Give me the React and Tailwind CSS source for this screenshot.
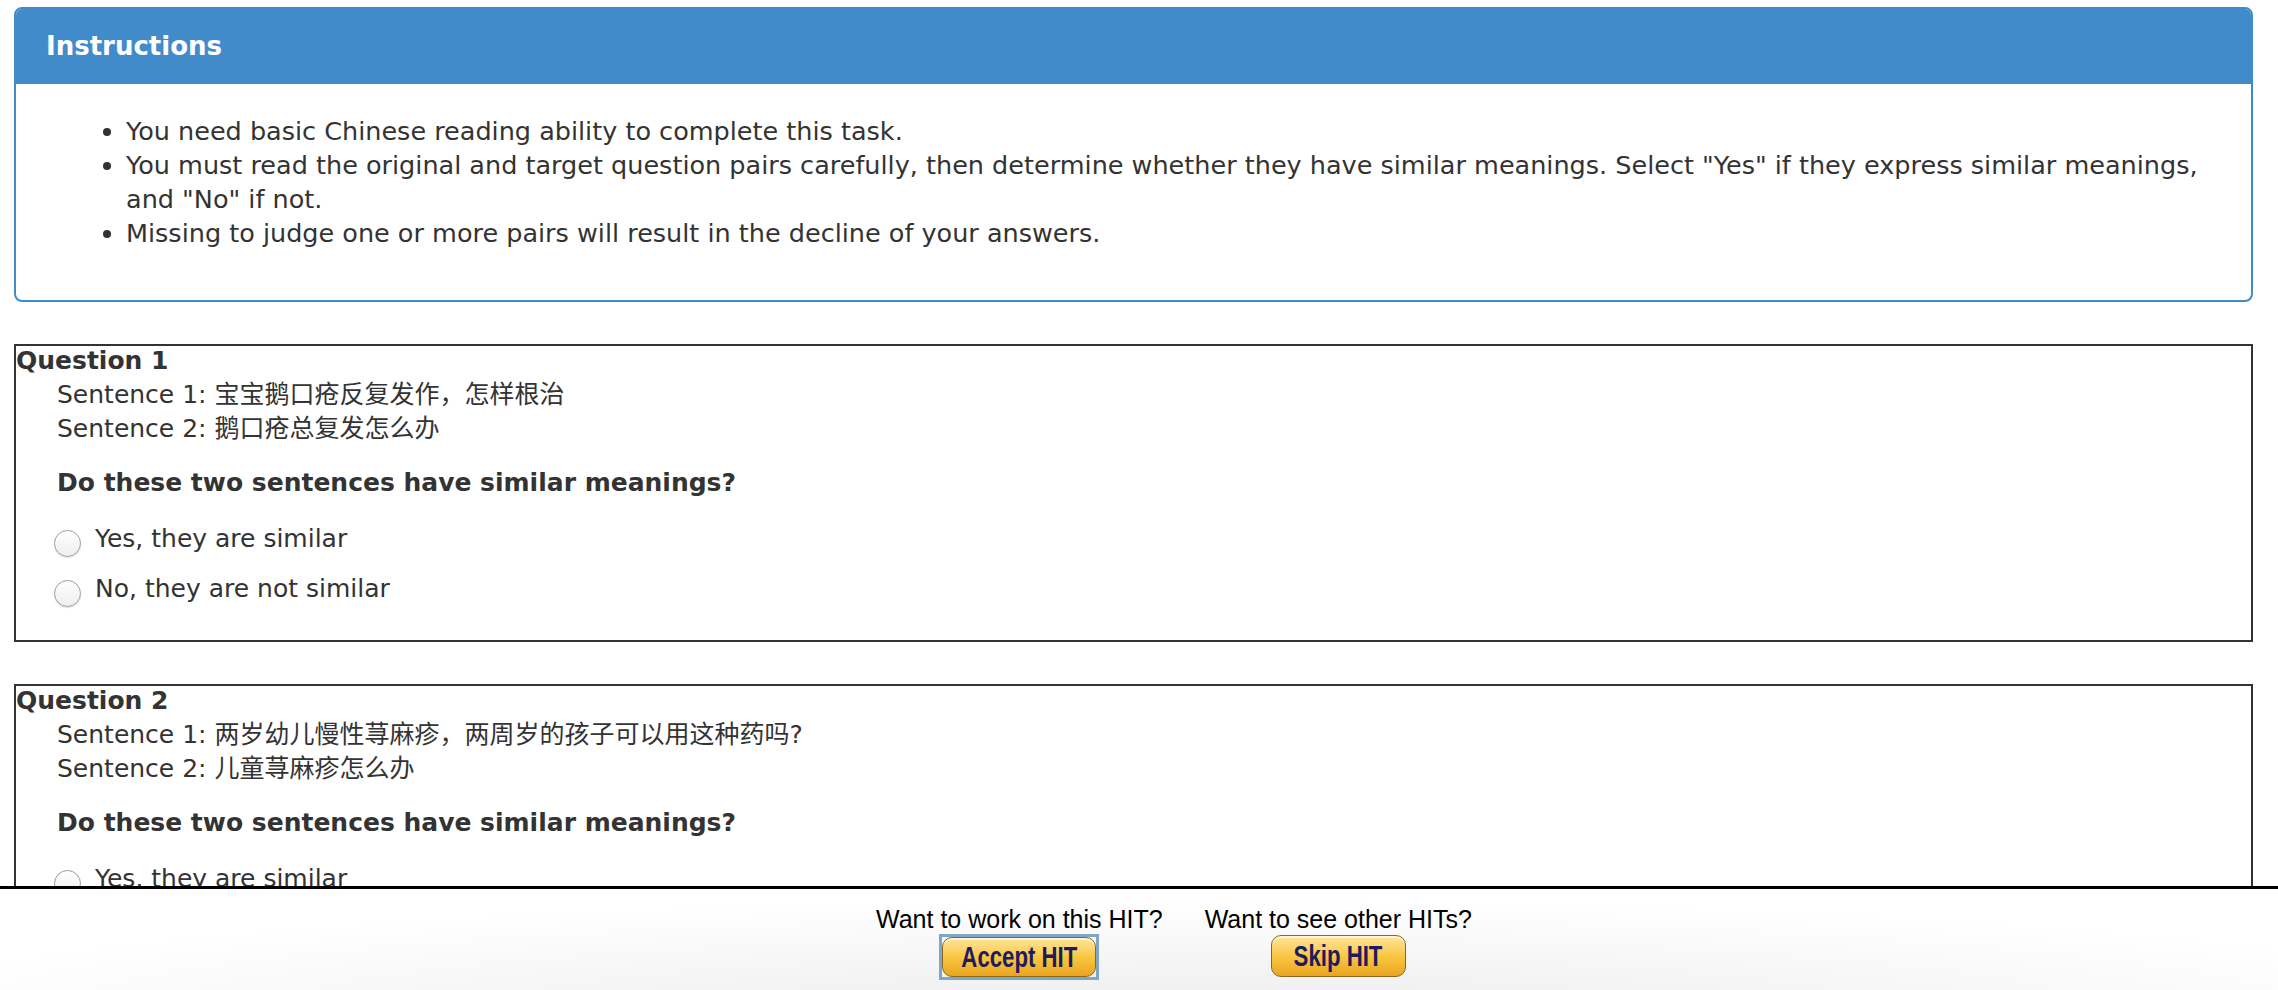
const questions = [
  {
    id: 1,
    s1: "宝宝鹅口疮反复发作，怎样根治",
    s2: "鹅口疮总复发怎么办",
  },
  {
    id: 2,
    s1: "两岁幼儿慢性荨麻疹，两周岁的孩子可以用这种药吗?",
    s2: "儿童荨麻疹怎么办",
  },
];

const Radio = ({ label }) => (
  <label className="flex items-center h-[34px]">
    <span className="w-[27px] h-[27px] mt-[8px] ml-[-3px] rounded-full border border-[#9c9c9c] bg-linear-to-b from-white to-[#eeeeee] shadow-[0_1px_1px_rgba(0,0,0,0.12)]" />
    <span className="ml-[14px]">{label}</span>
  </label>
);

const QuestionBox = ({ q }) => (
  <div className="mt-[42px] border-2 border-[#333] pb-[34px]">
    <div className="font-bold leading-[30px]">Question {q.id}</div>
    <div className="pl-[41px]">
      <div className="leading-[34px] mt-[2px]">Sentence 1: {q.s1}</div>
      <div className="leading-[34px]">Sentence 2: {q.s2}</div>
      <div className="font-bold leading-[34px] mt-[20px]">Do these two sentences have similar meanings?</div>
      <div className="mt-[22px] flex flex-col gap-[16px]">
        <Radio label="Yes, they are similar" />
        <Radio label="No, they are not similar" />
      </div>
    </div>
  </div>
);

const HitButton = ({ children, focused, width }) => (
  <div className={focused ? "border-[3px] border-[#7fa6c6]" : ""}>
    <button
      className={`${width} ${focused ? "h-[40px]" : "h-[42px]"} flex items-center justify-center rounded-[10px] border border-[#8a6a1a] bg-linear-to-b from-[#ffe59a] via-[#f9c741] to-[#eaa51f] shadow-[inset_0_2px_0_rgba(255,255,255,0.6)] text-[#1e1b5e] font-bold text-[30px] leading-none font-['Liberation_Sans_Narrow','Liberation_Sans',sans-serif]`}
    >
      <span className="inline-block whitespace-nowrap scale-x-[0.74]">{children}</span>
    </button>
  </div>
);

export default function App() {
  return (
    <div className="h-screen flex flex-col overflow-hidden bg-white text-[#333] text-[25px] font-['DejaVu_Sans','Noto_Sans_CJK_SC',sans-serif]">
      <div className="flex-1 overflow-hidden pl-[14px] pr-[25px] pt-[7px]">
        {/* Instructions panel */}
        <div className="border-2 border-[#428bca] rounded-[8px] overflow-hidden">
          <div className="h-[75px] bg-[#428bca] flex items-center px-[30px]">
            <h3 className="text-white font-bold text-[26px]">Instructions</h3>
          </div>
          <div className="pt-[30px] pb-[50px] px-[30px]">
            <ul className="list-disc pl-[80px] text-[25.5px] leading-[34px]">
              <li>You need basic Chinese reading ability to complete this task.</li>
              <li>
                You must read the original and target question pairs carefully, then determine whether they have
                similar meanings. Select "Yes" if they express similar meanings, and "No" if not.
              </li>
              <li>Missing to judge one or more pairs will result in the decline of your answers.</li>
            </ul>
          </div>
        </div>

        {questions.map((q) => (
          <QuestionBox key={q.id} q={q} />
        ))}
      </div>

      {/* Footer */}
      <footer className="shrink-0 h-[104px] border-t-[3px] border-black bg-[radial-gradient(ellipse_60%_120%_at_52%_130%,#ebebeb_0%,#ffffff_100%)] font-['Liberation_Sans',Arial,sans-serif] text-[25px] text-black">
        <div className="flex justify-center gap-[42px] pl-[70px] pt-[15px]">
          <div className="flex flex-col items-center">
            <div className="leading-[30px]">Want to work on this HIT?</div>
            <HitButton focused width="w-[154px]">Accept HIT</HitButton>
          </div>
          <div className="flex flex-col items-center">
            <div className="leading-[30px]">Want to see other HITs?</div>
            <div className="mt-[1px]">
              <HitButton width="w-[135px]">Skip HIT</HitButton>
            </div>
          </div>
        </div>
      </footer>
    </div>
  );
}
